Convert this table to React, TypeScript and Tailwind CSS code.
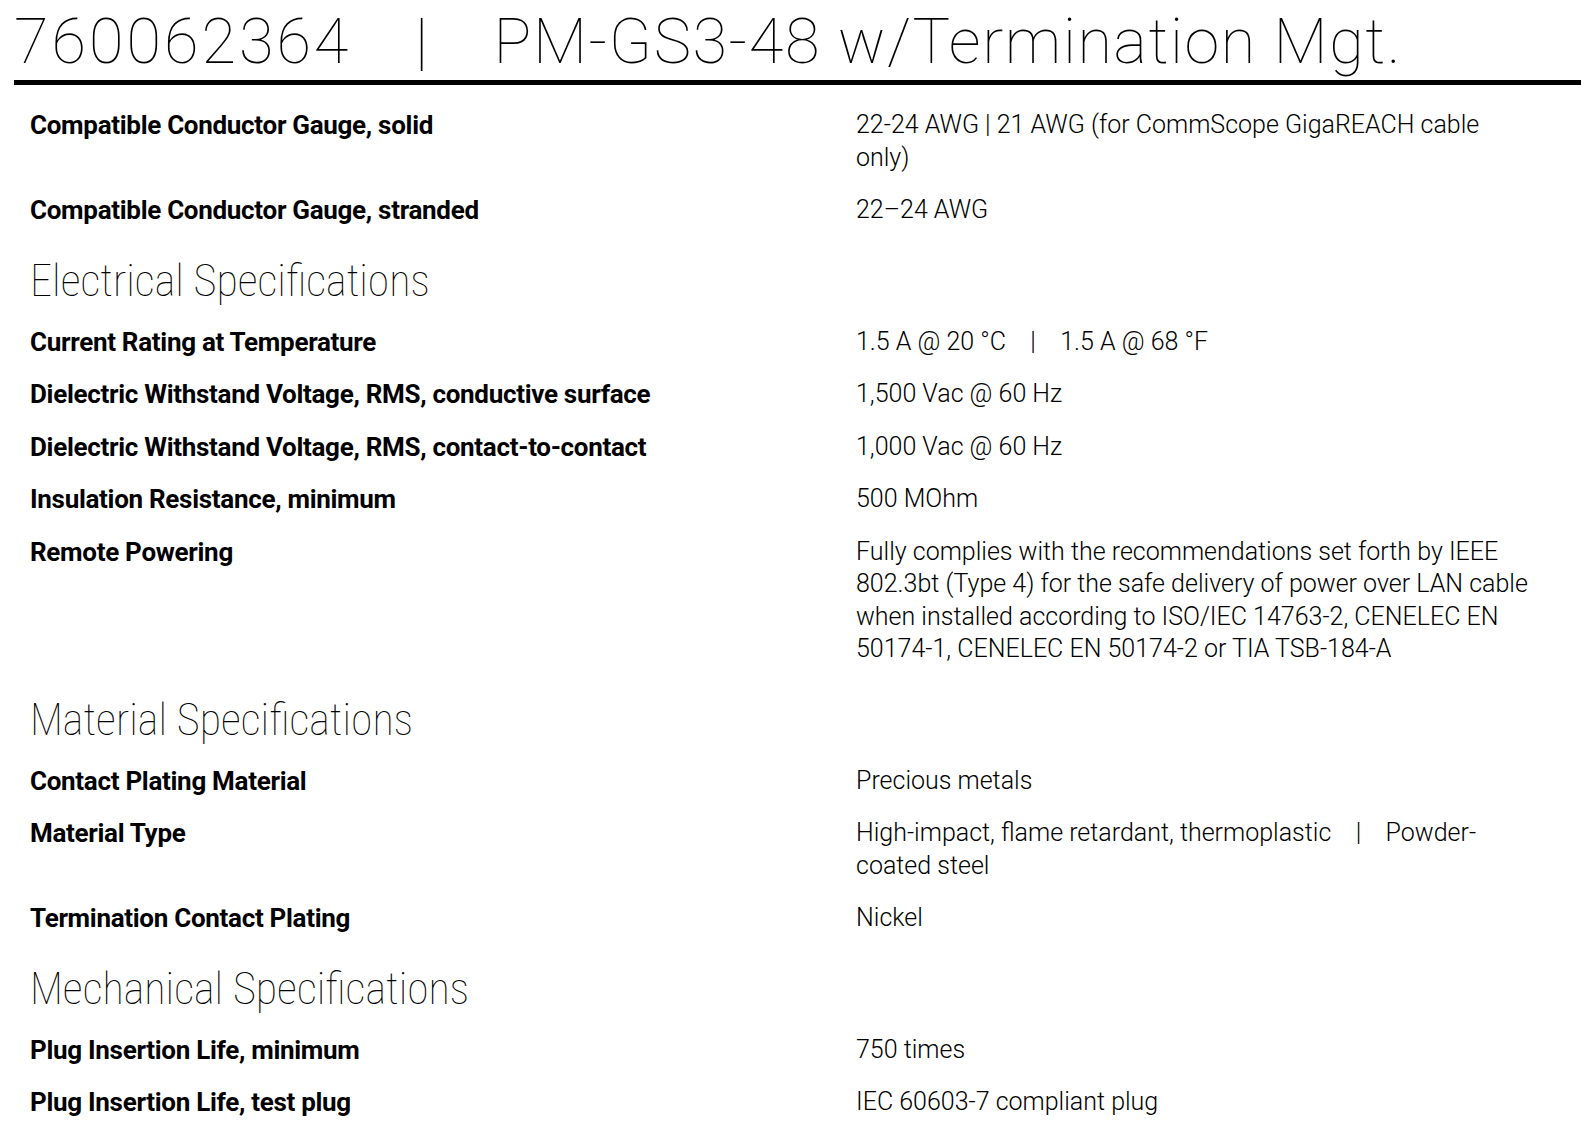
const font = { fontFamily: "Roboto, 'Liberation Sans', sans-serif" };

type Row = { label: string; value: string };

const sections: { title?: string; rows: Row[] }[] = [
  {
    rows: [
      {
        label: "Compatible Conductor Gauge, solid",
        value: "22-24 AWG | 21 AWG (for CommScope GigaREACH cable only)",
      },
      { label: "Compatible Conductor Gauge, stranded", value: "22–24 AWG" },
    ],
  },
  {
    title: "Electrical Specifications",
    rows: [
      {
        label: "Current Rating at Temperature",
        value: "1.5 A @ 20 °C\u00a0\u00a0\u00a0\u00a0|\u00a0\u00a0\u00a0 1.5 A @ 68 °F",
      },
      {
        label: "Dielectric Withstand Voltage, RMS, conductive surface",
        value: "1,500 Vac @ 60 Hz",
      },
      {
        label: "Dielectric Withstand Voltage, RMS, contact-to-contact",
        value: "1,000 Vac @ 60 Hz",
      },
      { label: "Insulation Resistance, minimum", value: "500 MOhm" },
      {
        label: "Remote Powering",
        value:
          "Fully complies with the recommendations set forth by IEEE 802.3bt (Type 4) for the safe delivery of power over LAN cable when installed according to ISO/IEC 14763-2, CENELEC EN 50174-1, CENELEC EN 50174-2 or TIA TSB-184-A",
      },
    ],
  },
  {
    title: "Material Specifications",
    rows: [
      { label: "Contact Plating Material", value: "Precious metals" },
      {
        label: "Material Type",
        value:
          "High-impact, flame retardant, thermoplastic\u00a0\u00a0\u00a0\u00a0|\u00a0\u00a0\u00a0 Powder-coated steel",
      },
      { label: "Termination Contact Plating", value: "Nickel" },
    ],
  },
  {
    title: "Mechanical Specifications",
    rows: [
      { label: "Plug Insertion Life, minimum", value: "750 times" },
      { label: "Plug Insertion Life, test plug", value: "IEC 60603-7 compliant plug" },
    ],
  },
];

export default function App() {
  return (
    <div className="min-h-screen bg-white text-black" style={font}>
      <div className="pl-[14px] pt-[4px]">
        <h1 className="whitespace-nowrap text-[63px] font-thin leading-[76px] tracking-[1.6px]">
          <span className="tracking-[3px]">760062364</span>
          <span className="mx-[64px]">|</span>
          PM-GS3-48 w/Termination Mgt.
        </h1>
        <div className="h-[5px] bg-black" />
      </div>
      <div className="pl-[30px] pt-[24px]">
        {sections.map((s, i) => (
          <div key={i}>
            {s.title && (
              <h2 className="mb-[17px] mt-[26px] text-[44px] font-thin font-stretch-[85%] leading-[56px]">
                {s.title}
              </h2>
            )}
            {s.rows.map((r, j) => (
              <div key={j} className="mb-[20px] grid grid-cols-[826px_676px] leading-[32.5px]">
                <div className="text-[26px] font-bold tracking-[-0.3px]">{r.label}</div>
                <div className="text-[25px] font-light">{r.value}</div>
              </div>
            ))}
          </div>
        ))}
      </div>
    </div>
  );
}
